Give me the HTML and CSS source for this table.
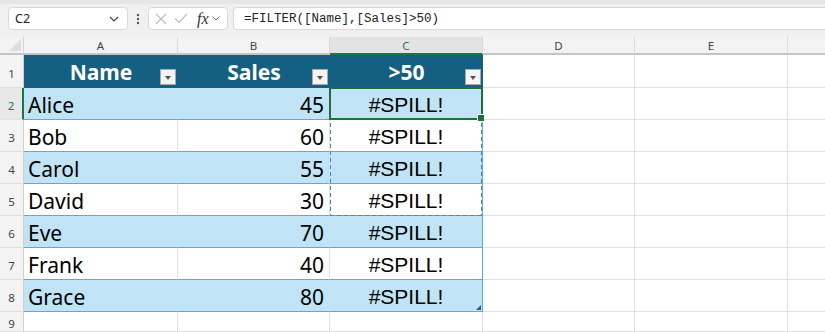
FILE: index.html
```html
<!DOCTYPE html>
<html>
<head>
<meta charset="utf-8">
<link rel="stylesheet" href="styles.css">
</head>
<body>
<div class="toolbar">
  <div class="namebox">
    <span class="nb-text">C2</span>
    <svg class="chev" width="10" height="6" viewBox="0 0 10 6"><path d="M1 1 L5 5 L9 1" fill="none" stroke="#444" stroke-width="1.2"/></svg>
  </div>
  <svg class="dots" width="4" height="12" viewBox="0 0 4 12"><circle cx="2" cy="2" r="1.2" fill="#555"/><circle cx="2" cy="6" r="1.2" fill="#555"/><circle cx="2" cy="10" r="1.2" fill="#555"/></svg>
  <div class="fxbox">
    <svg width="12" height="12" viewBox="0 0 12 12"><path d="M1 1 L11 11 M11 1 L1 11" stroke="#bdbdbd" stroke-width="1.1" fill="none"/></svg>
    <svg width="14" height="11" viewBox="0 0 14 11"><path d="M1 5.5 L5 9.5 L13 1" stroke="#bdbdbd" stroke-width="1.1" fill="none"/></svg>
    <span class="fx">fx</span>
    <svg class="fxchev" width="8" height="5" viewBox="0 0 8 5"><path d="M0.5 0.5 L4 4 L7.5 0.5" fill="none" stroke="#777" stroke-width="1"/></svg>
  </div>
  <div class="formula">=FILTER([Name],[Sales]&gt;50)</div>
</div>

<div class="sheet">
  <div class="corner"><span class="corner-tri"></span></div>
  <div class="colhead">A</div>
  <div class="colhead">B</div>
  <div class="colhead sel">C</div>
  <div class="colhead">D</div>
  <div class="colhead">E</div>
  <div class="colhead last"></div>

  <div class="rowhead">1</div>
  <div class="th">Name<span class="filt"></span></div>
  <div class="th">Sales<span class="filt"></span></div>
  <div class="th edge">&gt;50<span class="filt"></span></div>
  <div class="cell"></div><div class="cell"></div><div class="cell last"></div>

  <div class="rowhead sel">2</div>
  <div class="td band name">Alice</div>
  <div class="td band num">45</div>
  <div class="td band spill edge">#SPILL!<span class="spillrange"></span><span class="active"><span class="handle"></span></span></div>
  <div class="cell"></div><div class="cell"></div><div class="cell last"></div>

  <div class="rowhead">3</div>
  <div class="td name">Bob</div>
  <div class="td num">60</div>
  <div class="td spill edge">#SPILL!</div>
  <div class="cell"></div><div class="cell"></div><div class="cell last"></div>

  <div class="rowhead">4</div>
  <div class="td band name">Carol</div>
  <div class="td band num">55</div>
  <div class="td band spill edge">#SPILL!</div>
  <div class="cell"></div><div class="cell"></div><div class="cell last"></div>

  <div class="rowhead">5</div>
  <div class="td name">David</div>
  <div class="td num">30</div>
  <div class="td spill edge">#SPILL!</div>
  <div class="cell"></div><div class="cell"></div><div class="cell last"></div>

  <div class="rowhead">6</div>
  <div class="td band name">Eve</div>
  <div class="td band num">70</div>
  <div class="td band spill edge">#SPILL!</div>
  <div class="cell"></div><div class="cell"></div><div class="cell last"></div>

  <div class="rowhead">7</div>
  <div class="td name">Frank</div>
  <div class="td num">40</div>
  <div class="td spill edge">#SPILL!</div>
  <div class="cell"></div><div class="cell"></div><div class="cell last"></div>

  <div class="rowhead">8</div>
  <div class="td band name">Grace</div>
  <div class="td band num">80</div>
  <div class="td band spill edge">#SPILL!<span class="resize"></span></div>
  <div class="cell"></div><div class="cell"></div><div class="cell last"></div>

  <div class="rowhead">9</div>
  <div class="cell"></div><div class="cell"></div><div class="cell"></div>
  <div class="cell"></div><div class="cell"></div><div class="cell last"></div>
</div>
</body>
</html>
```

FILE: styles.css
```css
* { box-sizing: border-box; }
html, body { margin: 0; padding: 0; }
body {
  width: 825px;
  height: 332px;
  overflow: hidden;
  background: #fff;
  font-family: "Noto Sans", sans-serif;
}

.toolbar {
  height: 37px;
  background: #f0f0f0;
  border-top: 4px solid #e6e6e6;
  display: flex;
  align-items: flex-start;
  padding-top: 3px;
  padding-left: 8px;
}
.namebox {
  width: 120px;
  height: 23px;
  background: #fff;
  border: 1px solid #d9d9d9;
  border-radius: 4px;
  display: flex;
  align-items: center;
  justify-content: space-between;
  padding: 0 8px 0 6px;
}
.nb-text { font-size: 12.5px; color: #222; }
.dots { margin: 6px 8px 0 8px; }
.fxbox {
  width: 80px;
  height: 23px;
  background: #fff;
  border: 1px solid #d9d9d9;
  border-radius: 4px;
  display: flex;
  align-items: center;
  padding: 0 4px 0 6px;
  gap: 7px;
}
.fx {
  font-family: "Liberation Serif", serif;
  font-style: italic;
  font-size: 16px;
  color: #333;
  margin-left: 2px;
  line-height: 1;
}
.fxchev { margin-left: -4px; }
.formula {
  flex: 1;
  margin-left: 5px;
  height: 23px;
  background: #fff;
  border: 1px solid #d9d9d9;
  border-right: none;
  border-radius: 4px 0 0 4px;
  font-family: "Liberation Mono", monospace;
  font-size: 12.5px;
  color: #222;
  display: flex;
  align-items: center;
  padding-left: 10px;
}

.sheet {
  display: grid;
  grid-template-columns: 24px 154px 152px 153px 152px 153px 1fr;
  grid-template-rows: 18px 33px repeat(7, 32px) 1fr;
  height: 295px;
}

.corner {
  background: #f3f3f3;
  border-right: 1px solid #d4d4d4;
  border-bottom: 2px solid #c4c4c4;
  position: relative;
}
.corner-tri {
  position: absolute;
  right: 2px;
  bottom: 2px;
  width: 0;
  height: 0;
  border-left: 12px solid transparent;
  border-bottom: 12px solid #dedede;
}
.colhead {
  background: #f3f3f3;
  border-right: 1px solid #dadada;
  border-bottom: 2px solid #c4c4c4;
  font-family: "Noto Sans", sans-serif;
  font-size: 11.5px;
  color: #444;
  display: flex;
  align-items: center;
  justify-content: center;
  padding-top: 1px;
}
.colhead.sel {
  background: #e3e3e3;
  color: #107c41;
  border-bottom: 2px solid #107c41;
}
.colhead.last { border-right: none; }

.rowhead {
  background: #f3f3f3;
  border-right: 1px solid #cfcfcf;
  border-bottom: 1px solid #e1e1e1;
  font-size: 11.5px;
  color: #444;
  display: flex;
  align-items: center;
  justify-content: center;
  padding-top: 4px;
}
.rowhead.sel {
  color: #107c41;
  background: #e8e8e8;
  border-right: 2px solid #107c41;
}

.cell {
  border-right: 1px solid #e1e1e1;
  border-bottom: 1px solid #e1e1e1;
}
.cell.last { border-right: none; }

.th {
  background: #156082;
  color: #fff;
  font-weight: 700;
  font-size: 21px;
  display: flex;
  align-items: center;
  justify-content: center;
  position: relative;
  padding-top: 1px;
  border-bottom: 1px solid #156082;
}
.filt {
  position: absolute;
  right: 2px;
  bottom: 2px;
  width: 16px;
  height: 16px;
  background: #f4f4f4;
  border: 1px solid #a9a9a9;
}
.filt::after {
  content: "";
  position: absolute;
  left: 4px;
  top: 6px;
  border-left: 3.5px solid transparent;
  border-right: 3.5px solid transparent;
  border-top: 4px solid #555;
}

.td {
  background: #fff;
  border-bottom: 1px solid #4cb0e3;
  border-right: 1px solid #e1e1e1;
  font-size: 21px;
  color: #000;
  display: flex;
  align-items: center;
  position: relative;
  padding-top: 2px;
}
.td.band {
  background: #c0e4f5;
  border-right-color: #c0e4f5;
}
.td.edge, .td.band.edge { border-right: 1px solid #4cb0e3; }
.td.name { padding-left: 4px; }
.td.num { justify-content: flex-end; padding-right: 5px; }
.td.spill {
  justify-content: center;
  font-family: "Liberation Sans", sans-serif;
  font-size: 21px;
}

.active {
  position: absolute;
  left: -1px;
  top: -1px;
  right: -1px;
  bottom: -1px;
  border: 2px solid #1e6e3e;
  z-index: 3;
}
.handle {
  position: absolute;
  right: -4px;
  bottom: -4px;
  width: 6px;
  height: 6px;
  background: #1e6e3e;
  border: 1px solid #fff;
  box-sizing: content-box;
}
.spillrange {
  position: absolute;
  left: 0;
  top: 0;
  width: 100%;
  height: 128px;
  z-index: 2;
  background:
    repeating-linear-gradient(90deg, #4a7ed3 0 4px, transparent 4px 7px) left top / 100% 1px no-repeat,
    repeating-linear-gradient(90deg, #4a7ed3 0 4px, transparent 4px 7px) left bottom / 100% 1px no-repeat,
    repeating-linear-gradient(180deg, #4a7ed3 0 4px, transparent 4px 7px) left top / 1px 100% no-repeat,
    repeating-linear-gradient(180deg, #4a7ed3 0 4px, transparent 4px 7px) right top / 1px 100% no-repeat;
}
.resize {
  position: absolute;
  right: 1px;
  bottom: 1px;
  width: 0;
  height: 0;
  border-left: 5px solid transparent;
  border-bottom: 5px solid #2f5597;
}
```
